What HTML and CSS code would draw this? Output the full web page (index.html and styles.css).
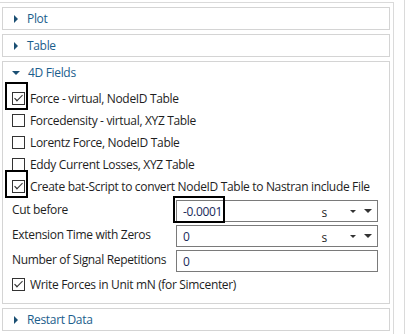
FILE: index.html
```html
<!DOCTYPE html>
<html lang="en">
<head>
  <meta charset="UTF-8" />
  <title>4D Fields</title>
  <link rel="stylesheet" href="styles.css">
</head>
<body>
  <div class="frame">
    <div class="panel">
      <div class="panel-head"><span class="tri right"></span>Plot</div>
    </div>
    <div class="panel">
      <div class="panel-head"><span class="tri right"></span>Table</div>
    </div>
    <div class="panel open">
      <div class="panel-head"><span class="tri down"></span>4D Fields</div>
      <div class="panel-body">
        <label class="check-row"><span class="box checked marked"></span>Force - virtual, NodeID Table</label>
        <label class="check-row"><span class="box"></span>Forcedensity - virtual, XYZ Table</label>
        <label class="check-row"><span class="box"></span>Lorentz Force, NodeID Table</label>
        <label class="check-row"><span class="box"></span>Eddy Current Losses, XYZ Table</label>
        <label class="check-row"><span class="box checked marked"></span>Create bat-Script to convert NodeID Table to Nastran include File</label>

        <div class="field-row first">
          <span class="field-label">Cut before</span>
          <div class="field marked">
            <span class="value">-0.0001</span>
            <span class="unit">s</span>
            <span class="arrow small"></span>
            <span class="arrow"></span>
          </div>
        </div>
        <div class="field-row">
          <span class="field-label">Extension Time with Zeros</span>
          <div class="field">
            <span class="value">0</span>
            <span class="unit">s</span>
            <span class="arrow small"></span>
            <span class="arrow"></span>
          </div>
        </div>
        <div class="field-row">
          <span class="field-label">Number of Signal Repetitions</span>
          <div class="field">
            <span class="value">0</span>
          </div>
        </div>

        <label class="check-row"><span class="box checked"></span>Write Forces in Unit mN (for Simcenter)</label>
      </div>
    </div>
    <div class="panel">
      <div class="panel-head"><span class="tri right"></span>Restart Data</div>
    </div>
  </div>
  <div class="scroll-line"></div>
</body>
</html>
```

FILE: styles.css
```css
body {
  margin: 0;
  background: #ffffff;
  font-family: 'Open Sans', 'Noto Sans', sans-serif;
  font-size: 12px;
  letter-spacing: -0.33px;
  color: #1e1e1e;
  display: flex;
  height: 334px;
  overflow: hidden;
}

.frame {
  width: 389px;
  margin-top: 2px;
  padding: 4px 3px 0 2px;
  border-top: 1px solid #dadada;
  border-right: 1px solid #dadada;
  display: flex;
  flex-direction: column;
  gap: 4px;
}

.scroll-line {
  margin-left: 10px;
  width: 1px;
  background: #dadada;
}

.panel {
  border: 1px solid #d4d4d4;
}

.panel-head {
  height: 21px;
  display: flex;
  align-items: center;
  color: #1b5e8c;
  padding-left: 10px;
}

.tri {
  width: 0;
  height: 0;
}

.tri.right {
  border-top: 4px solid transparent;
  border-bottom: 4px solid transparent;
  border-left: 4px solid #1b4f73;
  margin-left: 1px;
  margin-right: 9px;
}

.tri.down {
  border-left: 4px solid transparent;
  border-right: 4px solid transparent;
  border-top: 4px solid #1b4f73;
  margin-left: -1px;
  margin-right: 8px;
}

.panel-body {
  padding: 4px 0 8px 9px;
}

.check-row {
  display: flex;
  align-items: center;
  height: 22px;
  white-space: nowrap;
}

.box {
  position: relative;
  width: 11px;
  height: 11px;
  border: 1px solid #333333;
  margin-right: 5px;
  flex: none;
}

.box.checked::after {
  content: "";
  position: absolute;
  left: 2px;
  top: 1px;
  width: 6px;
  height: 3px;
  border-left: 1px solid #333333;
  border-bottom: 1px solid #333333;
  transform: translate(0, 1px) rotate(-45deg) scaleX(1.2);
}

.box.marked::before {
  content: "";
  position: absolute;
  left: -8px;
  top: -11px;
  width: 19px;
  height: 24px;
  border: 2px solid #000000;
}

.field-row {
  display: flex;
  align-items: center;
  height: 24px;
  margin-top: 1px;
}

.field-row.first {
  margin-top: 2px;
}

.field-label {
  width: 164px;
  flex: none;
  margin-top: -3px;
}

.field {
  position: relative;
  width: 200px;
  height: 20px;
  border: 1px solid #7a7a7a;
  display: flex;
  align-items: center;
  color: #1a2a5a;
}

.value {
  padding-left: 6px;
  flex: 1;
}

.unit {
  margin-right: 23px;
  margin-top: 3px;
  color: #1e1e1e;
}

.arrow {
  width: 0;
  height: 0;
  border-left: 4px solid transparent;
  border-right: 4px solid transparent;
  border-top: 4px solid #333333;
  margin-right: 5px;
}

.arrow.small {
  border-left-width: 3px;
  border-right-width: 3px;
  border-top-width: 3px;
  margin-right: 8px;
}

.field.marked::before {
  content: "";
  position: absolute;
  left: -4px;
  top: -5px;
  width: 48px;
  height: 23px;
  border: 2px solid #000000;
}
```
